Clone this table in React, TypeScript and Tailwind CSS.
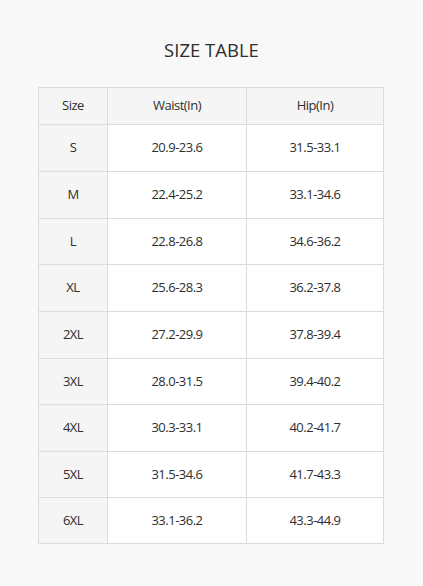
const rows = [
  { size: "S", waist: "20.9-23.6", hip: "31.5-33.1", h: "h-[47px]" },
  { size: "M", waist: "22.4-25.2", hip: "33.1-34.6", h: "h-[47px]" },
  { size: "L", waist: "22.8-26.8", hip: "34.6-36.2", h: "h-[46px]" },
  { size: "XL", waist: "25.6-28.3", hip: "36.2-37.8", h: "h-[47px]" },
  { size: "2XL", waist: "27.2-29.9", hip: "37.8-39.4", h: "h-[47px]" },
  { size: "3XL", waist: "28.0-31.5", hip: "39.4-40.2", h: "h-[46px]" },
  { size: "4XL", waist: "30.3-33.1", hip: "40.2-41.7", h: "h-[47px]" },
  { size: "5XL", waist: "31.5-34.6", hip: "41.7-43.3", h: "h-[46px]" },
  { size: "6XL", waist: "33.1-36.2", hip: "43.3-44.9", h: "h-[46px]" },
];

const cell = "flex items-center justify-center border-b border-r border-[#dcdcdc]";

export default function App() {
  return (
    <div className="h-[586px] w-[423px] bg-[#f8f8f8] pt-[37px] font-['Open_Sans',sans-serif] text-[#2e2e2e]">
      <h1 className="text-center text-[18.5px] leading-[25px] font-normal">SIZE TABLE</h1>

      <div className="mt-[25px] ml-[38px] w-[346px] border-l border-t border-[#dcdcdc] text-[13px] tracking-[-0.5px]">
        <div className="grid h-[37px] grid-cols-[69px_139px_137px] bg-[#f5f5f5]">
          <div className={cell}>Size</div>
          <div className={cell}>Waist(In)</div>
          <div className={cell}>Hip(In)</div>
        </div>
        {rows.map((r) => (
          <div key={r.size} className={`grid grid-cols-[69px_139px_137px] ${r.h}`}>
            <div className={`${cell} bg-[#f5f5f5]`}>{r.size}</div>
            <div className={`${cell} bg-white`}>{r.waist}</div>
            <div className={`${cell} bg-white`}>{r.hip}</div>
          </div>
        ))}
      </div>
    </div>
  );
}
